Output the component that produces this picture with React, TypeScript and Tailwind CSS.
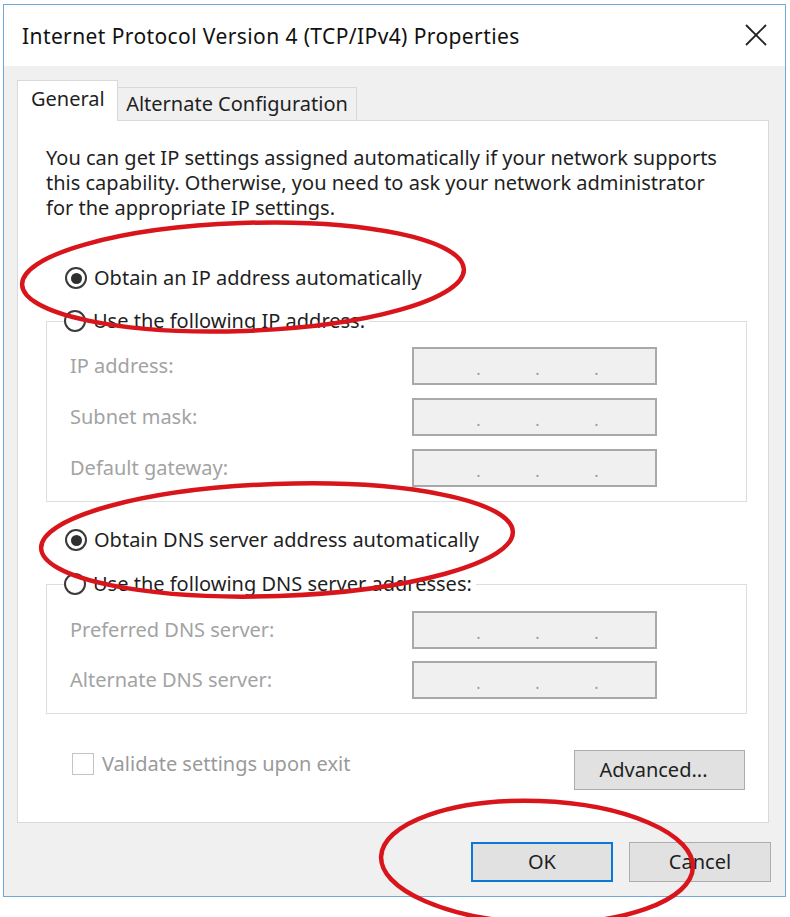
import React from "react";

function Radio({ checked }: { checked?: boolean }) {
  return (
    <span className="flex h-[22px] w-[22px] shrink-0 items-center justify-center rounded-full border-2 border-[#3a3a3a] bg-white">
      {checked ? <span className="h-[11px] w-[11px] rounded-full bg-[#2f2f2f]" /> : null}
    </span>
  );
}

function IpBox() {
  return (
    <div className="flex h-[38px] w-[245px] items-end border-2 border-[#a9a9a9] bg-[#f0f0f0] pb-[6px] pl-[61px] text-[16px] leading-[16px] text-[#9a9a9a]">
      <span className="w-[7px] text-center">.</span>
      <span className="ml-[52px] w-[7px] text-center">.</span>
      <span className="ml-[52px] w-[7px] text-center">.</span>
    </div>
  );
}

function Field({ label }: { label: string }) {
  return (
    <div className="flex items-center">
      <span className="w-[342px] text-[#a3a3a3]">{label}</span>
      <IpBox />
    </div>
  );
}

export default function App() {
  return (
    <div className="relative h-[917px] w-[790px] overflow-hidden bg-white pl-[3px] pt-[4px] font-['Noto_Sans',sans-serif] text-[20px] leading-[26px] text-[#1f1f1f]">
      <div className="flex h-[893px] w-[783px] flex-col border border-[#72a9db] bg-[#f0f0f0]">
        {/* Title bar */}
        <div className="flex h-[61px] items-center justify-between bg-white pl-[18px] pr-[18px]">
          <span className="text-[21px] tracking-[0.4px] text-[#111111]">Internet Protocol Version 4 (TCP/IPv4) Properties</span>
          <svg width="22" height="22" viewBox="0 0 22 22" className="mt-[-2px]">
            <line x1="1" y1="1" x2="21" y2="21" stroke="#222" strokeWidth="1.8" />
            <line x1="21" y1="1" x2="1" y2="21" stroke="#222" strokeWidth="1.8" />
          </svg>
        </div>

        {/* Body */}
        <div className="flex flex-1 flex-col pl-[13px] pr-[16px] pt-[14px] pb-[14px]">
          {/* Tabs */}
          <div className="flex h-[40px] items-end">
            <div className="relative z-10 -mb-px flex h-[41px] w-[101px] items-center border border-b-0 border-[#d9d9d9] bg-white pl-[13px] pb-[4px]">
              General
            </div>
            <div className="flex h-[33px] w-[239px] items-center justify-center border border-b-0 border-l-0 border-[#d9d9d9] bg-[#f0f0f0]">
              Alternate Configuration
            </div>
          </div>

          {/* Panel */}
          <div className="flex h-[703px] flex-col border border-[#d9d9d9] bg-white pl-[28px] pr-[21px] pt-[24px]">
            <p className="leading-[25px]">
              You can get IP settings assigned automatically if your network supports
              <br />
              this capability. Otherwise, you need to ask your network administrator
              <br />
              for the appropriate IP settings.
            </p>

            <div className="mt-[45px] flex h-[26px] items-center gap-[7px] pl-[19px]">
              <Radio checked />
              <span>Obtain an IP address automatically</span>
            </div>

            <fieldset className="mt-[17px] border border-[#dddddd] pb-[14px]">
              <legend className="ml-[17px] pr-[4px]">
                <span className="flex h-[26px] items-center gap-[7px]">
                  <Radio />
                  <span>Use the following IP address:</span>
                </span>
              </legend>
              <div className="mt-[13px] flex flex-col gap-[13px] pl-[23px]">
                <Field label="IP address:" />
                <Field label="Subnet mask:" />
                <Field label="Default gateway:" />
              </div>
            </fieldset>

            <div className="mt-[25px] flex h-[26px] items-center gap-[7px] pl-[19px]">
              <Radio checked />
              <span>Obtain DNS server address automatically</span>
            </div>

            <fieldset className="mt-[18px] border border-[#dddddd] pb-[14px]">
              <legend className="ml-[17px] pr-[4px]">
                <span className="flex h-[26px] items-center gap-[7px]">
                  <Radio />
                  <span>Use the following DNS server addresses:</span>
                </span>
              </legend>
              <div className="mt-[14px] flex flex-col gap-[12px] pl-[23px]">
                <Field label="Preferred DNS server:" />
                <Field label="Alternate DNS server:" />
              </div>
            </fieldset>

            <div className="mt-[36px] flex items-start justify-between pr-[2px]">
              <div className="flex h-[26px] items-center gap-[8px] pl-[26px] pt-[2px]">
                <span className="h-[22px] w-[22px] border border-[#c4c4c4] bg-white" />
                <span className="text-[#9a9a9a]">Validate settings upon exit</span>
              </div>
              <button className="h-[40px] w-[171px] border border-[#adadad] bg-[#e1e1e1] pr-[12px] text-[#1f1f1f]">
                Advanced...
              </button>
            </div>
          </div>

          {/* Buttons */}
          <div className="-mr-[2px] mt-auto flex justify-end gap-[16px]">
            <button className="h-[40px] w-[142px] border-2 border-[#0a78d4] bg-[#e1e1e1] text-[#1f1f1f]">OK</button>
            <button className="h-[40px] w-[142px] border border-[#adadad] bg-[#e1e1e1] text-[#1f1f1f]">Cancel</button>
          </div>
        </div>
      </div>

      {/* Red hand-drawn annotations */}
      <svg className="pointer-events-none absolute left-0 top-0" width="790" height="917" viewBox="0 0 790 917">
        <ellipse cx="243" cy="277" rx="221" ry="54" transform="rotate(-2 243 277)" fill="none" stroke="#d9151c" strokeWidth="4.5" />
        <ellipse cx="277" cy="540" rx="236" ry="56" transform="rotate(-2 277 540)" fill="none" stroke="#d9151c" strokeWidth="4.5" />
        <ellipse cx="537" cy="862" rx="156" ry="61" transform="rotate(2 537 862)" fill="none" stroke="#d9151c" strokeWidth="4.5" />
      </svg>
    </div>
  );
}
